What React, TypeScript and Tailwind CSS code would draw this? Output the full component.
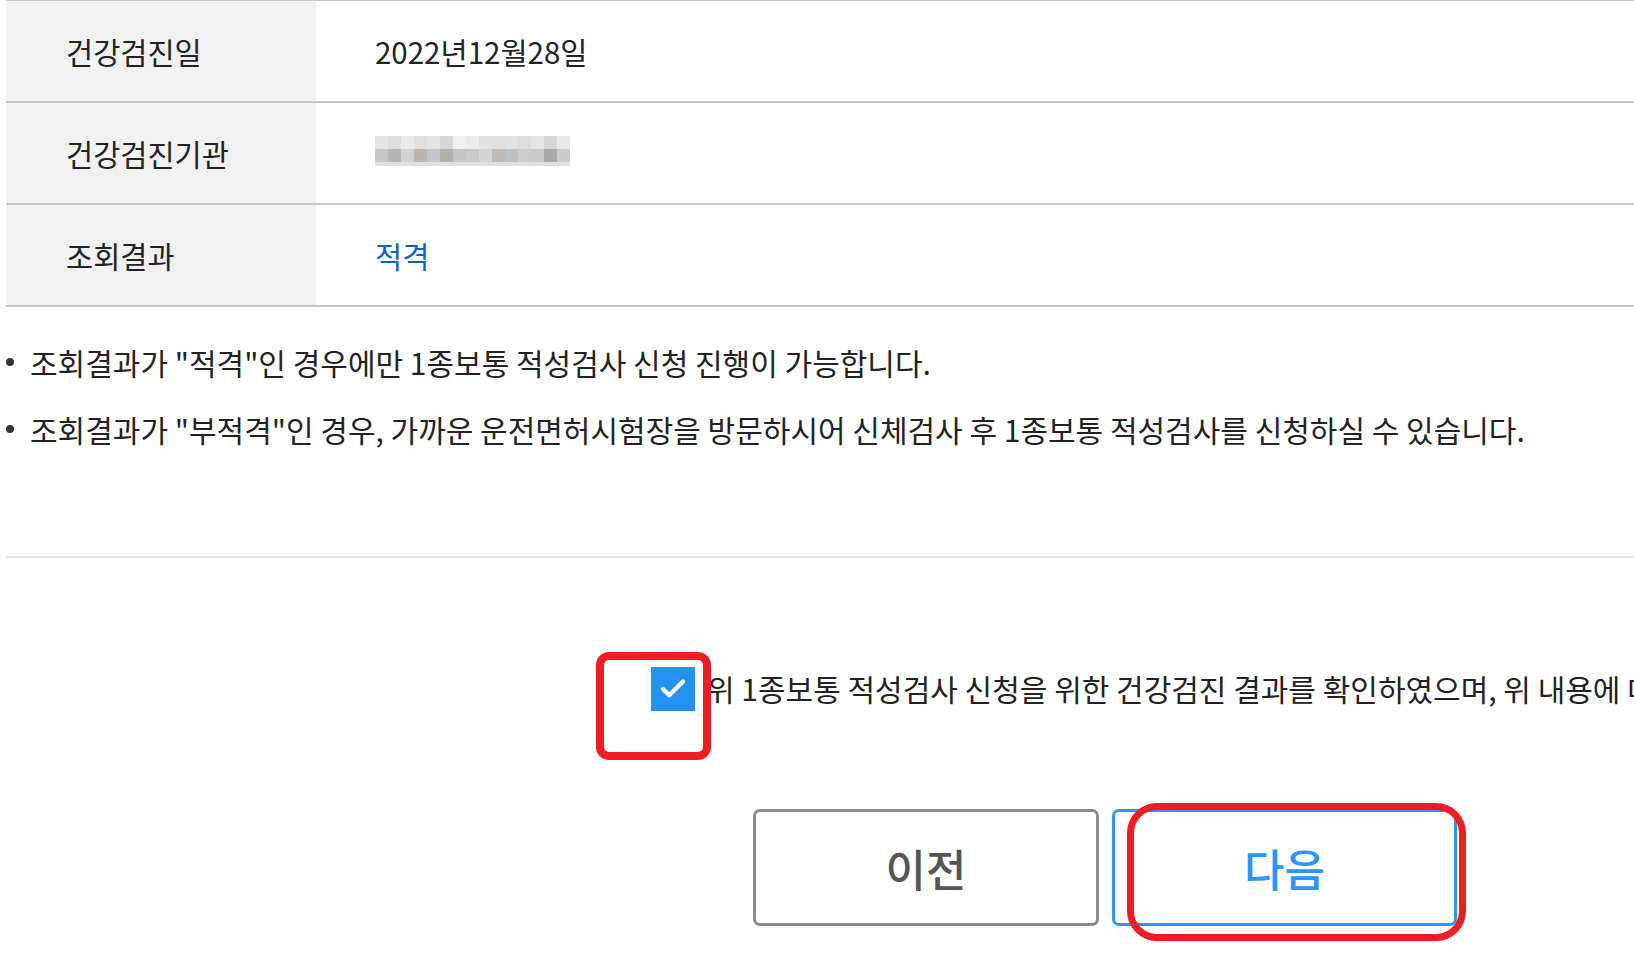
import { Check } from "lucide-react";

type Row = {
  label: string;
  value: React.ReactNode;
};

const mosaicTop = [
  "#e4e4e4", "#dcdde0", "#e8e8e8", "#e1e0de", "#e4e4e2", "#d6d6d8", "#eef0f1", "#ececec",
  "#e2e1df", "#e1e0de", "#e2e3e5", "#dcdde0", "#e6e5e3", "#d6d6d6", "#e8e8e8",
];

const mosaicBottom = [
  "#c8c6c4", "#b5b6b8", "#d2d2d0", "#bdb5b0", "#c2c6cb", "#b3afae", "#c3c6c8", "#c9c8c6",
  "#d3d4d2", "#c1bbb8", "#bdc0c5", "#cdcdcf", "#cacaca", "#a9a8a8", "#cbcccd",
];

function Mosaic() {
  return (
    <div className="mt-[-4px] flex flex-col">
      {[mosaicTop, mosaicBottom].map((row, r) => (
        <div key={r} className="flex">
          {row.map((c, i) => (
            <div key={i} className="h-[13px] w-[13px]" style={{ backgroundColor: c }} />
          ))}
        </div>
      ))}
      <div className="h-[4px] w-[195px] bg-[#e0e0e0]" />
    </div>
  );
}

const rows: Row[] = [
  { label: "건강검진일", value: "2022년12월28일" },
  { label: "건강검진기관", value: <Mosaic /> },
  { label: "조회결과", value: <span className="text-[#0b62c4]">적격</span> },
];

const notes = [
  '조회결과가 "적격"인 경우에만 1종보통 적성검사 신청 진행이 가능합니다.',
  '조회결과가 "부적격"인 경우, 가까운 운전면허시험장을 방문하시어 신체검사 후 1종보통 적성검사를 신청하실 수 있습니다.',
];

export default function App() {
  return (
    <div className="relative h-[972px] w-[1634px] overflow-hidden bg-white font-['Noto_Sans_CJK_KR',sans-serif] text-[29.5px] text-[#222]">
      {/* 결과 테이블 */}
      <div className="ml-[6px] border-t border-[#c8c8c8]">
        {rows.map((row) => (
          <div key={row.label} className="flex h-[102px] border-b-2 border-[#c6c6c6]">
            <div className="flex w-[310px] items-center bg-[#f1f1f1] pl-[60px]">{row.label}</div>
            <div className="flex flex-1 items-center pl-[59px]">{row.value}</div>
          </div>
        ))}
      </div>

      <ul className="mt-[35px] flex flex-col gap-[27px] text-[30px]">
        {notes.map((n) => (
          <li key={n} className="flex h-[40px] items-center whitespace-nowrap">
            <span className="ml-[6px] mr-[16px] h-[8px] w-[8px] rounded-full bg-[#333]" />
            {n}
          </li>
        ))}
      </ul>

      <div className="ml-[6px] mt-[107px] h-[2px] bg-[#e6e6e6]" />

      {/* 동의 체크 */}
      <div className="mt-[108px] flex items-center whitespace-nowrap pl-[651px] text-[30px]">
        <div className="relative shrink-0">
          <div className="flex h-[44px] w-[44px] items-center justify-center bg-[#2592f3]">
            <Check className="h-[30px] w-[30px] text-white" strokeWidth={3.5} />
          </div>
          <div className="pointer-events-none absolute left-[-55px] top-[-15px] h-[108px] w-[115px] rounded-[13px] border-[8px] border-[#ee1d25]" />
        </div>
        <span className="ml-[12px]">위 1종보통 적성검사 신청을 위한 건강검진 결과를 확인하였으며, 위 내용에 대해 동의합니다.</span>
      </div>

      {/* 버튼 */}
      <div className="mt-[98px] flex gap-[13px] pl-[753px]">
        <button className="flex h-[117px] w-[346px] items-center justify-center rounded-[7px] border-[3px] border-[#8a8a8a] text-[44px] font-medium text-[#555]">
          이전
        </button>
        <div className="relative">
          <button className="flex h-[117px] w-[345px] items-center justify-center rounded-[7px] border-[3px] border-[#2c96f6] text-[44px] font-medium text-[#2c96f6]">
            다음
          </button>
          <div className="pointer-events-none absolute left-[15px] top-[-6px] h-[138px] w-[339px] rounded-[30px] border-[7px] border-[#ee1d25]" />
        </div>
      </div>
    </div>
  );
}
